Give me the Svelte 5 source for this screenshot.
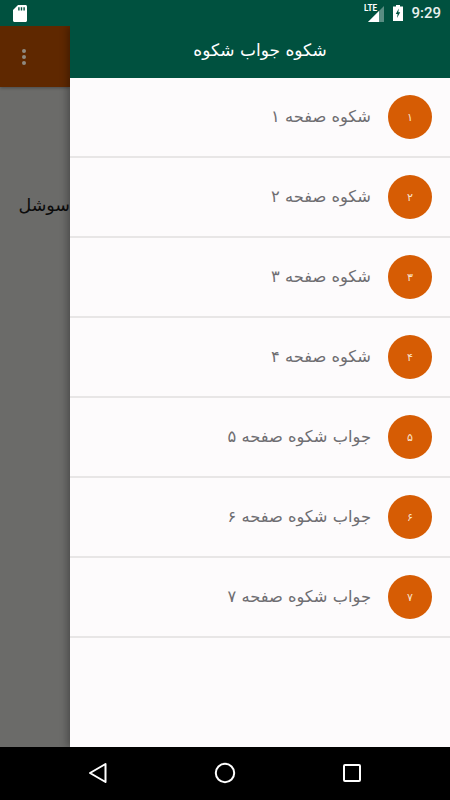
<script>
  const rows = [
    { n: '۱', t: 'شکوه صفحه ۱' },
    { n: '۲', t: 'شکوه صفحه ۲' },
    { n: '۳', t: 'شکوه صفحه ۳' },
    { n: '۴', t: 'شکوه صفحه ۴' },
    { n: '۵', t: 'جواب شکوه صفحه ۵' },
    { n: '۶', t: 'جواب شکوه صفحه ۶' },
    { n: '۷', t: 'جواب شکوه صفحه ۷' }
  ];
</script>

<div class="phone">
  <header class="status">
    <svg class="sd" viewBox="0 0 14 17" width="14" height="17" aria-hidden="true">
      <path d="M5 0H12.5C13.3 0 14 .7 14 1.5V15.5C14 16.3 13.3 17 12.5 17H1.5C.7 17 0 16.3 0 15.5V5Z" fill="#fff"/>
      <path d="M5.2 2.2h1.4v3.2H5.2zM7.8 2.2h1.4v3.2H7.8zM10.4 2.2h1.4v3.2h-1.4z" fill="#00513f"/>
    </svg>
    <span class="spacer"></span>
    <span class="signal">
      <span class="lte">LTE</span>
      <svg viewBox="0 0 16 16" width="16" height="16" aria-hidden="true">
        <path d="M16 0V16H0Z" fill="#fff" opacity=".35"/>
        <path d="M11 5V16H0Z" fill="#fff"/>
      </svg>
    </span>
    <svg class="battery" viewBox="0 0 10 16" width="10" height="16" aria-hidden="true">
      <path d="M3 0H7V1.5H10V16H0V1.5H3Z" fill="#fff"/>
      <path d="M5.8 3.5 2.8 9H4.6L4 13 7.2 7.2H5.3Z" fill="#00513f"/>
    </svg>
    <span class="time">9:29</span>
  </header>

  <div class="body">
    <aside class="behind">
      <div class="behind-bar">
        <span class="dot"></span><span class="dot"></span><span class="dot"></span>
      </div>
      <div class="behind-text" dir="rtl">سوشل</div>
    </aside>

    <main class="drawer" dir="rtl">
      <div class="appbar"><span class="title">شکوه جواب شکوه</span></div>
      <ul class="list">
        {#each rows as r}
          <li class="row">
            <span class="badge">{r.n}</span>
            <span class="label">{r.t}</span>
          </li>
        {/each}
      </ul>
    </main>
  </div>

  <nav class="nav">
    <svg viewBox="0 0 20 22" width="20" height="22" aria-hidden="true">
      <path d="M17.5 2 2 11 17.5 20Z" fill="none" stroke="#fff" stroke-width="2" stroke-linejoin="round"/>
    </svg>
    <svg viewBox="0 0 22 22" width="22" height="22" aria-hidden="true">
      <circle cx="11" cy="11" r="9.2" fill="none" stroke="#fff" stroke-width="2"/>
    </svg>
    <svg viewBox="0 0 20 20" width="20" height="20" aria-hidden="true">
      <rect x="2" y="2" width="16" height="16" rx="1" fill="none" stroke="#fff" stroke-width="2"/>
    </svg>
  </nav>
</div>

<style>
  :global(body) { margin: 0; }
  .phone {
    width: 450px;
    height: 800px;
    display: flex;
    flex-direction: column;
    overflow: hidden;
    font-family: "DejaVu Sans", "Noto Sans", sans-serif;
  }
  .status {
    height: 26px;
    flex: none;
    background: #00513f;
    display: flex;
    align-items: center;
    padding: 0 9px 0 13px;
    color: #fff;
    position: relative;
    z-index: 1;
  }
  .spacer { flex: 1; }
  .signal { display: flex; position: relative; margin-right: 9px; margin-top: 1px; }
  .lte {
    position: absolute;
    left: -4px;
    top: -2px;
    font: bold 9px/9px "Roboto", sans-serif;
    transform: scaleX(.9);
    transform-origin: left;
  }
  .battery { margin-right: 8px; }
  .time {
    font: 500 15px/18px "Roboto", sans-serif;
    color: #e8f0ee;
  }
  .body { flex: 1; display: flex; min-height: 0; }
  .behind {
    width: 70px;
    flex: none;
    background: #6b6b69;
    overflow: hidden;
  }
  .behind-bar {
    height: 61px;
    background: #5f2800;
    box-shadow: 0 1px 3px rgba(0, 0, 0, .3);
    display: flex;
    flex-direction: column;
    align-items: flex-start;
    justify-content: center;
    gap: 2px;
    padding-left: 22px;
    box-sizing: border-box;
  }
  .dot { width: 4px; height: 4px; border-radius: 50%; background: #8f8a80; }
  .behind-text {
    margin-top: 100px;
    padding-left: 18px;
    width: 52px;
    font-size: 17.5px;
    line-height: 36px;
    color: #0c0c0c;
    white-space: nowrap;
  }
  .drawer {
    flex: 1;
    background: #fdfbfc;
    box-shadow: -3px 0 7px rgba(0, 0, 0, .28);
    position: relative;
    display: flex;
    flex-direction: column;
  }
  .appbar {
    height: 52px;
    flex: none;
    background: #00513f;
    color: #fff;
    font-size: 17px;
    display: flex;
    align-items: center;
    justify-content: center;
  }
  .title { padding-bottom: 4px; }
  .list { list-style: none; margin: 0; padding: 0; }
  .row {
    height: 78px;
    border-bottom: 2px solid #e8e6e6;
    display: flex;
    align-items: center;
    padding-right: 18px;
    gap: 17px;
  }
  .badge {
    width: 44px;
    height: 44px;
    border-radius: 50%;
    background: #d65c04;
    color: #fbe3cc;
    font-size: 11px;
    display: flex;
    align-items: center;
    justify-content: center;
    flex: none;
  }
  .label { font-size: 16.3px; color: #6f6e72; padding-bottom: 2px; }
  .nav {
    height: 53px;
    flex: none;
    background: #000;
    display: flex;
    align-items: center;
    justify-content: space-between;
    padding: 0 88px 2px;
    box-sizing: border-box;
  }
</style>
